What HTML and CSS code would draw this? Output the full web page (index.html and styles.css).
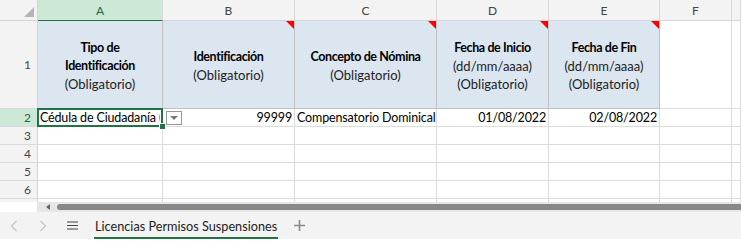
FILE: index.html
```html
<!DOCTYPE html>
<html lang="es">
<head>
  <meta charset="UTF-8" />
  <title>Licencias Permisos Suspensiones</title>
  <link rel="stylesheet" href="styles.css">
</head>
<body>
  <div class="sheet">
    <div class="corner"><span class="corner-tri"></span></div>
    <div class="col-head active">A</div>
    <div class="col-head">B</div>
    <div class="col-head">C</div>
    <div class="col-head">D</div>
    <div class="col-head">E</div>
    <div class="col-head">F</div>
    <div class="col-head"></div>

    <div class="row-head">1</div>
    <div class="cell title"><b>Tipo de<br>Identificación</b><span>(Obligatorio)</span></div>
    <div class="cell title note"><b>Identificación</b><span>(Obligatorio)</span></div>
    <div class="cell title note"><b>Concepto de Nómina</b><span>(Obligatorio)</span></div>
    <div class="cell title note"><b>Fecha de Inicio</b><span>(dd/mm/aaaa)</span><span>(Obligatorio)</span></div>
    <div class="cell title note"><b>Fecha de Fin</b><span>(dd/mm/aaaa)</span><span>(Obligatorio)</span></div>
    <div class="cell"></div>
    <div class="cell"></div>

    <div class="row-head active">2</div>
    <div class="cell selected"><span class="clip">Cédula de Ciudadanía (CC)</span></div>
    <div class="cell num"><span class="dropdown"></span>99999</div>
    <div class="cell">Compensatorio Dominical</div>
    <div class="cell num">01/08/2022</div>
    <div class="cell num">02/08/2022</div>
    <div class="cell"></div>
    <div class="cell"></div>

    <div class="row-head">3</div>
    <div class="cell"></div><div class="cell"></div><div class="cell"></div><div class="cell"></div><div class="cell"></div><div class="cell"></div><div class="cell"></div>
    <div class="row-head">4</div>
    <div class="cell"></div><div class="cell"></div><div class="cell"></div><div class="cell"></div><div class="cell"></div><div class="cell"></div><div class="cell"></div>
    <div class="row-head">5</div>
    <div class="cell"></div><div class="cell"></div><div class="cell"></div><div class="cell"></div><div class="cell"></div><div class="cell"></div><div class="cell"></div>
    <div class="row-head">6</div>
    <div class="cell"></div><div class="cell"></div><div class="cell"></div><div class="cell"></div><div class="cell"></div><div class="cell"></div><div class="cell"></div>
    <div class="row-head blank"></div>
    <div class="cell"></div><div class="cell"></div><div class="cell"></div><div class="cell"></div><div class="cell"></div><div class="cell"></div><div class="cell"></div>
  </div>

  <div class="hscroll">
    <div class="hscroll-pad"></div>
    <div class="hscroll-track">
      <span class="hscroll-arrow"></span>
      <span class="hscroll-thumb"></span>
    </div>
  </div>

  <div class="tabs">
    <span class="tab-btn prev">
      <svg width="8" height="12" viewBox="0 0 8 12"><path d="M6.5 1L1.5 6l5 5" fill="none" stroke="#c4c4c4" stroke-width="1.2"/></svg>
    </span>
    <span class="tab-btn next">
      <svg width="8" height="12" viewBox="0 0 8 12"><path d="M1.5 1l5 5-5 5" fill="none" stroke="#c4c4c4" stroke-width="1.2"/></svg>
    </span>
    <span class="tab-btn menu">
      <svg width="11" height="9" viewBox="0 0 11 9"><path d="M0 1h11M0 4.5h11M0 8h11" stroke="#444" stroke-width="1.2"/></svg>
    </span>
    <span class="tab">Licencias Permisos Suspensiones</span>
    <span class="tab-btn add">
      <svg width="11" height="11" viewBox="0 0 11 11"><path d="M5.5 0v11M0 5.5h11" stroke="#8a8a8a" stroke-width="1.6"/></svg>
    </span>
  </div>
</body>
</html>
```

FILE: styles.css
```css
body {
  margin: 0;
  font-family: Lato, "Open Sans", sans-serif;
  font-size: 12.5px;
  color: #000;
  background: #fff;
  overflow: hidden;
}
.sheet {
  display: grid;
  grid-template-columns: 38px 125px 132px 142px 112px 111px 72px 1fr;
  grid-template-rows: 21px 88px 18px 18px 18px 18px 18px 18px;
  height: 202px;
  overflow: hidden;
}
.corner {
  background: #f3f3f3;
  border-right: 1px solid #d4d4d4;
  border-bottom: 1px solid #d4d4d4;
  display: flex;
  justify-content: flex-end;
  align-items: flex-end;
  padding: 0 3px 3px 0;
}
.corner-tri {
  width: 0;
  height: 0;
  border-left: 10px solid transparent;
  border-bottom: 10px solid #b5b5b5;
}
.col-head {
  background: #f3f3f3;
  border-right: 1px solid #dadada;
  border-bottom: 1px solid #d4d4d4;
  display: flex;
  align-items: center;
  justify-content: center;
  color: #444;
  font-size: 12px;
}
.col-head.active {
  background: #cce8d6;
  border-bottom: 1px solid #217346;
  color: #1d6b3f;
}
.row-head {
  background: #f3f3f3;
  border-right: 1px solid #d4d4d4;
  border-bottom: 1px solid #dadada;
  display: flex;
  align-items: center;
  justify-content: flex-end;
  padding-right: 6px;
  color: #444;
  font-size: 12px;
}
.row-head.active {
  background: #cce8d6;
  border-right: 1px solid #217346;
  color: #1d6b3f;
}
.cell {
  border-right: 1px solid #dcdcdc;
  border-bottom: 1px solid #dcdcdc;
  display: flex;
  align-items: center;
  padding: 0 2px;
  white-space: nowrap;
  overflow: hidden;
  position: relative;
  letter-spacing: -0.15px;
}
.cell.num {
  justify-content: flex-end;
}
.cell.title {
  background: #dce6f1;
  border-right: 1px solid #c0c0c0;
  border-bottom: 1px solid #c0c0c0;
  flex-direction: column;
  justify-content: center;
  text-align: center;
  line-height: 18px;
  padding-top: 2px;
  font-size: 13px;
  letter-spacing: 0;
}
.cell.title b {
  font-weight: bold;
  font-size: 12.5px;
  letter-spacing: -0.4px;
}
.cell.title span {
  color: #222;
}
.cell.note::after {
  content: "";
  position: absolute;
  top: 0;
  right: 0;
  border-left: 8px solid transparent;
  border-top: 8px solid #ff0000;
}
.cell.selected {
  overflow: visible;
  z-index: 2;
}
.clip {
  display: block;
  min-width: 0;
  overflow: hidden;
  flex: 1;
}
.cell.selected::before {
  content: "";
  position: absolute;
  left: -1px;
  top: -1px;
  right: -1px;
  bottom: -1px;
  border: 2px solid #217346;
  pointer-events: none;
}
.cell.selected::after {
  content: "";
  position: absolute;
  right: -4px;
  bottom: -4px;
  width: 5px;
  height: 5px;
  background: #217346;
  border: 1px solid #fff;
}
.dropdown {
  position: absolute;
  left: 3px;
  top: 2px;
  width: 14px;
  height: 12px;
  border: 1px solid #999;
  background: #fff;
}
.dropdown::after {
  content: "";
  position: absolute;
  left: 3px;
  top: 4px;
  border-left: 4px solid transparent;
  border-right: 4px solid transparent;
  border-top: 4px solid #777;
}
.hscroll {
  display: flex;
  height: 10px;
}
.hscroll-pad {
  width: 37px;
  background: #fff;
}
.hscroll-track {
  flex: 1;
  background: #e6e6e6;
  display: flex;
  align-items: center;
  gap: 7px;
  padding-left: 9px;
}
.hscroll-arrow {
  width: 0;
  height: 0;
  border-top: 3px solid transparent;
  border-bottom: 3px solid transparent;
  border-right: 4px solid #666;
}
.hscroll-thumb {
  flex: 1;
  height: 6px;
  background: #888;
  border-radius: 3px 0 0 3px;
}
.tabs {
  display: flex;
  align-items: center;
  height: 27px;
  background: #f3f3f3;
}
.tab-btn {
  display: flex;
  align-items: center;
  justify-content: center;
  height: 27px;
}
.tab-btn.prev {
  width: 28px;
}
.tab-btn.next {
  width: 30px;
}
.tab-btn.menu {
  width: 28px;
}
.tab-btn.add {
  width: 20px;
  margin-left: 11px;
}
.tab {
  height: 27px;
  box-sizing: border-box;
  display: flex;
  align-items: center;
  margin-left: 8px;
  padding: 2px 1px 0;
  border-bottom: 2px solid #217346;
  color: #222;
  font-size: 12.7px;
}
```
